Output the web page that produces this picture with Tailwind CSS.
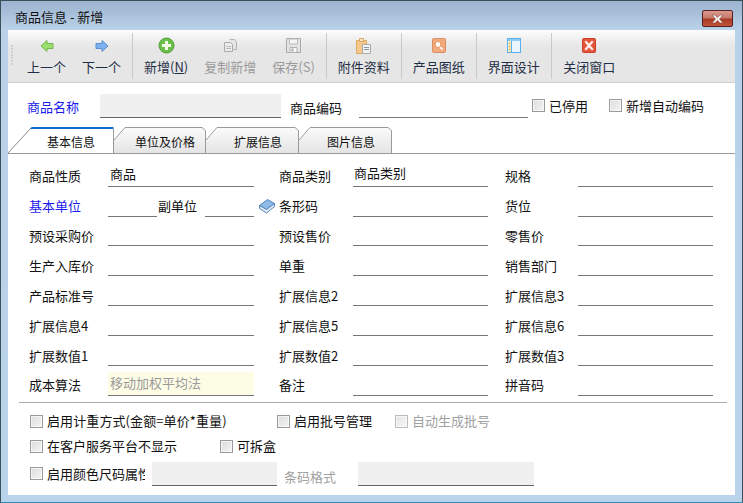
<!DOCTYPE html>
<html lang="zh-CN">
<head>
<meta charset="utf-8">
<title>商品信息 - 新增</title>
<script src="https://cdn.jsdelivr.net/npm/@tailwindcss/browser@4"></script>
</head>
<body class="m-0 w-[743px] h-[503px] overflow-hidden bg-[#b9d3ea] font-['Noto_Sans_CJK_SC','Liberation_Sans',sans-serif] text-[13px] leading-[18px] text-[#111]">
<div class="w-[743px] h-[503px] flex flex-col border border-[#3c4f5c] border-b-[#2a8fb0] bg-[linear-gradient(180deg,#9bb4cf_0px,#a6bdd7_10px,#b9d2e9_29px,#b9d3ea_100%)]">
  <!-- Title bar -->
  <div class="h-[29px] shrink-0 flex items-start pl-[14px] pr-[9px]">
    <span class="text-[#111] mt-[7px]">商品信息 - 新增</span>
    <div class="ml-auto w-[31px] h-[17px] mt-[9px] rounded-[2px] border border-[#5a2020] bg-[linear-gradient(180deg,#d99a8e_0%,#c87a6c_45%,#a93a26_55%,#c2543c_100%)] flex items-center justify-center">
      <svg width="15" height="10" viewBox="0 0 15 10"><path d="M2 1h3l2.500 2.500L10 1h3L9.500 5 13 9h-3L7.500 6.500 5 9H2l3.500-4z" fill="#f4f0ee" stroke="#7a4038" stroke-width=".5"/></svg>
    </div>
  </div>
  <!-- Client area -->
  <div class="ml-[7px] mr-[7px] w-[727px] h-[465px] bg-white flex flex-col">
    <!-- Toolbar -->
    <div class="h-[53px] shrink-0 flex items-start border-b border-[#cfcfcf] bg-[linear-gradient(180deg,#fdfdfd_0px,#ececec_12px,#e6e6e6_18px,#e6e6e6_100%)]">
      <div class="w-[11px] shrink-0 h-full flex flex-col gap-[1px] pt-[15px] pl-[3px]">
        <i class="block w-[2px] h-[2px] bg-[#cfcfcf]"></i><i class="block w-[2px] h-[2px] bg-[#cfcfcf]"></i><i class="block w-[2px] h-[2px] bg-[#cfcfcf]"></i><i class="block w-[2px] h-[2px] bg-[#cfcfcf]"></i><i class="block w-[2px] h-[2px] bg-[#cfcfcf]"></i><i class="block w-[2px] h-[2px] bg-[#cfcfcf]"></i><i class="block w-[2px] h-[2px] bg-[#cfcfcf]"></i>
      </div>
      <div class="w-[55px] shrink-0 flex flex-col items-center pt-[9px] text-[#1f2f45]">
        <svg class="h-[14px]" width="14" height="14" viewBox="0 0 14 14"><path d="M7 1.500 1 7l6 5.500V9.500h6v-5H7z" fill="#9ade6e" stroke="#72b84c"/></svg>
        <span class="mt-[5px]">上一个</span>
      </div>
      <div class="w-[55px] shrink-0 flex flex-col items-center pt-[9px] text-[#1f2f45]">
        <svg class="h-[14px]" width="14" height="14" viewBox="0 0 14 14"><path d="M7 1.500 13 7l-6 5.500V9.500H1v-5h6z" fill="#7fb2ee" stroke="#5a8fd0"/></svg>
        <span class="mt-[5px]">下一个</span>
      </div>
      <i class="block w-[1px] h-[46px] mt-[3px] ml-[3px] bg-[#c9c9c9]"></i>
      <div class="pl-[11px] pr-[16px] shrink-0 flex flex-col items-center pt-[7px] text-[#1f2f45]">
        <svg class="h-[17px]" width="17" height="17" viewBox="0 0 17 17"><circle cx="8.500" cy="8.500" r="7.500" fill="#6cc04a" stroke="#4f9f38"/><path d="M7 4h3v3h3v3h-3v3H7v-3H4V7h3z" fill="#f2fbe9"/></svg>
        <span class="mt-[4px]">新增(<span class="underline">N</span>)</span>
      </div>
      <div class="pr-[16px] shrink-0 flex flex-col items-center pt-[8px] text-[#9a9a9a]">
        <svg class="h-[15px]" width="15" height="15" viewBox="0 0 15 15"><path d="M6.500 1.500h5l2 2v8h-3" fill="#e4e4e4" stroke="#b4b4b4"/><path d="M1.500 4.500h6l2 2v7h-8z" fill="#ececec" stroke="#aaa"/><path d="M3 8.500h5M3 10.500h5" stroke="#bbb"/></svg>
        <span class="mt-[5px]">复制新增</span>
      </div>
      <div class="pr-[11px] shrink-0 flex flex-col items-center pt-[8px] text-[#9a9a9a]">
        <svg class="h-[15px]" width="15" height="15" viewBox="0 0 15 15"><path d="M.500.500h14v14H.500z" fill="#e4e4e4" stroke="#aaa"/><path d="M3.500 1h8v5h-8z" fill="#f4f4f4" stroke="#bbb"/><path d="M4 9.500h7v5H4z" fill="#f7f7f7" stroke="#b0b0b0"/><path d="M5.500 10.500h2v3h-2z" fill="#aaa"/></svg>
        <span class="mt-[5px]">保存(S)</span>
      </div>
      <i class="block w-[1px] h-[46px] mt-[3px] bg-[#c9c9c9]"></i>
      <div class="w-[74px] shrink-0 flex flex-col items-center pt-[7px] text-[#1f2f45]">
        <svg class="h-[17px]" width="15" height="17" viewBox="0 0 15 17"><path d="M.500 3.500h10v13H.500z" fill="#f6c98b" stroke="#e0a860"/><path d="M3.500 1.500h4v3h-4z" fill="#f8e6c8" stroke="#d8a868"/><path d="M6.500 7.500h8v9h-8z" fill="#f2f2f2" stroke="#aaa"/><path d="M8 10.500h5M8 12.500h5" stroke="#8a98a8"/></svg>
        <span class="mt-[4px]">附件资料</span>
      </div>
      <i class="block w-[1px] h-[46px] mt-[3px] bg-[#c9c9c9]"></i>
      <div class="w-[74px] shrink-0 flex flex-col items-center pt-[8px] text-[#1f2f45]">
        <svg class="h-[15px]" width="14" height="15" viewBox="0 0 14 15"><rect x=".5" y=".5" width="13" height="14" rx="1" fill="#f2ab80" stroke="#d98e60"/><circle cx="6" cy="6.500" r="3" fill="#fff" stroke="#e89a5e" stroke-width="1.200"/><path d="m8 9 2.500 2.500" stroke="#fff" stroke-width="1.500"/></svg>
        <span class="mt-[5px]">产品图纸</span>
      </div>
      <i class="block w-[1px] h-[46px] mt-[3px] bg-[#c9c9c9]"></i>
      <div class="w-[74px] shrink-0 flex flex-col items-center pt-[8px] text-[#1f2f45]">
        <svg class="h-[15px]" width="14" height="15" viewBox="0 0 14 15"><rect x=".5" y=".5" width="13" height="14" fill="#eaf5fd" stroke="#58b0ee"/><rect x="1" y="1" width="12" height="2" fill="#8ccbf4"/><rect x="1.500" y="3" width="3" height="11" fill="#fbe6a8"/><path d="M2.500 5v1M2.500 8v1M2.500 11v1" stroke="#d89a30"/><path d="M4.500 3v11" stroke="#58b0ee"/></svg>
        <span class="mt-[5px]">界面设计</span>
      </div>
      <i class="block w-[1px] h-[46px] mt-[3px] bg-[#c9c9c9]"></i>
      <div class="w-[75px] shrink-0 flex flex-col items-center pt-[8px] text-[#1f2f45]">
        <svg class="h-[15px]" width="14" height="15" viewBox="0 0 14 15"><rect x=".5" y=".5" width="13" height="14" rx="1" fill="#e6543a" stroke="#c8402a"/><path d="M2.500 4 4 2.500l3 3 3-3L11.500 4l-3 3.500 3 3.500-1.500 1.500-3-3-3 3L2.500 11l3-3.500z" fill="#fbeeea"/></svg>
        <span class="mt-[5px]">关闭窗口</span>
      </div>
    </div>

    <!-- Name row -->
    <div class="h-[44px] shrink-0 flex items-start">
      <span class="ml-[19px] mt-[15px] w-[52px] whitespace-nowrap text-[#1a1aee]">商品名称</span>
      <div class="ml-[21px] mt-[11px] w-[181px] h-[24px] bg-[#f0f0f0] border-b border-[#666]"></div>
      <span class="ml-[9px] mt-[16px] w-[52px] whitespace-nowrap">商品编码</span>
      <div class="ml-[17px] mt-[11px] w-[169px] h-[24px] border-b border-[#777]"></div>
      <i class="ml-[4px] mt-[16px] block w-[13px] h-[13px] border border-[#9a9a9a] bg-[linear-gradient(135deg,#dcdcdc,#f4f4f4)] outline outline-1 -outline-offset-2 outline-white/60"></i>
      <span class="ml-[4px] mt-[14px] whitespace-nowrap">已停用</span>
      <i class="ml-[21px] mt-[16px] block w-[13px] h-[13px] border border-[#9a9a9a] bg-[linear-gradient(135deg,#dcdcdc,#f4f4f4)] outline outline-1 -outline-offset-2 outline-white/60"></i>
      <span class="ml-[4px] mt-[14px] whitespace-nowrap">新增自动编码</span>
    </div>

    <!-- Tabs -->
    <div class="h-[27px] shrink-0 flex items-stretch border-b border-[#999] text-[12px]">
      <div class="relative w-[106px] shrink-0 flex items-center">
        <svg class="absolute left-0 top-0" width="106" height="26" viewBox="0 0 106 26"><path d="M0 26 23 1h82v25z" fill="#fff"/><path d="M0 26 23 1" stroke="#8a8a8a" fill="none"/><path d="M105.500 2v24" stroke="#999" fill="none"/><path d="M23 .5 24 0h81.500v2H22z" fill="#0a6fd0"/></svg>
        <span class="relative ml-[39px] mt-[3px]">基本信息</span>
      </div>
      <div class="relative w-[92px] shrink-0 flex items-center">
        <svg class="absolute left-0 top-0" width="92" height="26" viewBox="0 0 92 26"><defs><linearGradient id="t1" x1="0" y1="0" x2="0" y2="1"><stop offset="0" stop-color="#fbfbfb"/><stop offset="1" stop-color="#e4e4e4"/></linearGradient></defs><path d="M0 13 11 .5h77l3.500 3V26H0z" fill="url(#t1)"/><path d="M0 13 11 .5h77l3.500 3V26" stroke="#999" fill="none"/></svg>
        <span class="relative ml-[21px] mt-[3px] whitespace-nowrap">单位及价格</span>
      </div>
      <div class="relative w-[93px] shrink-0 flex items-center">
        <svg class="absolute left-0 top-0" width="93" height="26" viewBox="0 0 93 26"><defs><linearGradient id="t2" x1="0" y1="0" x2="0" y2="1"><stop offset="0" stop-color="#fbfbfb"/><stop offset="1" stop-color="#e4e4e4"/></linearGradient></defs><path d="M0 13 11 .5h78l3.500 3V26H0z" fill="url(#t2)"/><path d="M0 13 11 .5h78l3.500 3V26" stroke="#999" fill="none"/></svg>
        <span class="relative ml-[28px] mt-[3px] whitespace-nowrap">扩展信息</span>
      </div>
      <div class="relative w-[93px] shrink-0 flex items-center">
        <svg class="absolute left-0 top-0" width="93" height="26" viewBox="0 0 93 26"><defs><linearGradient id="t3" x1="0" y1="0" x2="0" y2="1"><stop offset="0" stop-color="#fbfbfb"/><stop offset="1" stop-color="#e4e4e4"/></linearGradient></defs><path d="M0 13 11 .5h78l3.500 3V26H0z" fill="url(#t3)"/><path d="M0 13 11 .5h78l3.500 3V26" stroke="#999" fill="none"/></svg>
        <span class="relative ml-[28px] mt-[3px] whitespace-nowrap">图片信息</span>
      </div>
    </div>

    <!-- Field grid -->
    <div class="pl-[21px] pt-[3px] grid grid-cols-[250px_226px_208px] grid-rows-[30px_30px_29px_30px_30px_30px_30px_30px]">
      <div class="flex items-end pr-[25px]"><span class="w-[79px] shrink-0 mb-[2px]">商品性质</span><div class="flex-1 h-[24px] border-b border-[#777] pl-[2px] pt-[2px]">商品</div></div>
      <div class="flex items-end pr-[17px]"><span class="w-[74px] shrink-0 mb-[2px]">商品类别</span><div class="flex-1 h-[24px] border-b border-[#777] pl-[1px] pt-[1px]">商品类别</div></div>
      <div class="flex items-end"><span class="w-[73px] shrink-0 mb-[2px]">规格</span><div class="flex-1 h-[24px] border-b border-[#777]"></div></div>

      <div class="flex items-end pr-[25px]"><span class="w-[79px] shrink-0 mb-[2px] text-[#1a1aee]">基本单位</span><div class="w-[49px] h-[24px] border-b border-[#777]"></div><span class="ml-[1px] w-[47px] shrink-0 mb-[2px]">副单位</span><div class="flex-1 h-[24px] border-b border-[#777]"></div></div>
      <div class="flex items-end pr-[17px] relative"><svg class="absolute left-[-20px] top-[12px]" width="16" height="15" viewBox="0 0 16 15"><path d="M.5 6.500 8.500.5l7 4-8 6z" fill="#8fbbe8" stroke="#4f82ba"/><path d="M.5 6.500v3l7 4.500 8-6.500v-3l-8 6z" fill="#e3eef9" stroke="#4f82ba"/></svg><span class="w-[74px] shrink-0 mb-[2px]">条形码</span><div class="flex-1 h-[24px] border-b border-[#777]"></div></div>
      <div class="flex items-end"><span class="w-[73px] shrink-0 mb-[2px]">货位</span><div class="flex-1 h-[24px] border-b border-[#777]"></div></div>

      <div class="flex items-end pr-[25px]"><span class="w-[79px] shrink-0 mb-[1px]">预设采购价</span><div class="flex-1 h-[24px] border-b border-[#777]"></div></div>
      <div class="flex items-end pr-[17px]"><span class="w-[74px] shrink-0 mb-[1px]">预设售价</span><div class="flex-1 h-[24px] border-b border-[#777]"></div></div>
      <div class="flex items-end"><span class="w-[73px] shrink-0 mb-[1px]">零售价</span><div class="flex-1 h-[24px] border-b border-[#777]"></div></div>

      <div class="flex items-end pr-[25px]"><span class="w-[79px] shrink-0 mb-[1px]">生产入库价</span><div class="flex-1 h-[24px] border-b border-[#777]"></div></div>
      <div class="flex items-end pr-[17px]"><span class="w-[74px] shrink-0 mb-[1px]">单重</span><div class="flex-1 h-[24px] border-b border-[#777]"></div></div>
      <div class="flex items-end"><span class="w-[73px] shrink-0 mb-[1px]">销售部门</span><div class="flex-1 h-[24px] border-b border-[#777]"></div></div>

      <div class="flex items-end pr-[25px]"><span class="w-[79px] shrink-0 mb-[1px]">产品标准号</span><div class="flex-1 h-[24px] border-b border-[#777]"></div></div>
      <div class="flex items-end pr-[17px]"><span class="w-[74px] shrink-0 mb-[1px]">扩展信息2</span><div class="flex-1 h-[24px] border-b border-[#777]"></div></div>
      <div class="flex items-end"><span class="w-[73px] shrink-0 mb-[1px]">扩展信息3</span><div class="flex-1 h-[24px] border-b border-[#777]"></div></div>

      <div class="flex items-end pr-[25px]"><span class="w-[79px] shrink-0 mb-[1px]">扩展信息4</span><div class="flex-1 h-[24px] border-b border-[#777]"></div></div>
      <div class="flex items-end pr-[17px]"><span class="w-[74px] shrink-0 mb-[1px]">扩展信息5</span><div class="flex-1 h-[24px] border-b border-[#777]"></div></div>
      <div class="flex items-end"><span class="w-[73px] shrink-0 mb-[1px]">扩展信息6</span><div class="flex-1 h-[24px] border-b border-[#777]"></div></div>

      <div class="flex items-end pr-[25px]"><span class="w-[79px] shrink-0 mb-[1px]">扩展数值1</span><div class="flex-1 h-[24px] border-b border-[#777]"></div></div>
      <div class="flex items-end pr-[17px]"><span class="w-[74px] shrink-0 mb-[1px]">扩展数值2</span><div class="flex-1 h-[24px] border-b border-[#777]"></div></div>
      <div class="flex items-end"><span class="w-[73px] shrink-0 mb-[1px]">扩展数值3</span><div class="flex-1 h-[24px] border-b border-[#777]"></div></div>

      <div class="flex items-end pr-[25px]"><span class="w-[79px] shrink-0 mb-[2px]">成本算法</span><div class="flex-1 h-[24px] border-b border-[#777] bg-[#fdfde6] pl-[2px] pt-[2px] text-[#9a9a9a]">移动加权平均法</div></div>
      <div class="flex items-end pr-[17px]"><span class="w-[74px] shrink-0 mb-[2px]">备注</span><div class="flex-1 h-[24px] border-b border-[#777]"></div></div>
      <div class="flex items-end"><span class="w-[73px] shrink-0 mb-[2px]">拼音码</span><div class="flex-1 h-[24px] border-b border-[#777]"></div></div>
    </div>

    <div class="ml-[11px] w-[708px] h-[1px] mt-[6px] bg-[#aaa] shrink-0"></div>

    <!-- Options -->
    <div class="h-[18px] mt-[9px] ml-[22px] flex items-center shrink-0">
      <i class="block w-[13px] h-[13px] border border-[#9a9a9a] bg-[linear-gradient(135deg,#dcdcdc,#f4f4f4)] outline outline-1 -outline-offset-2 outline-white/60"></i><span class="ml-[4px] w-[230px] whitespace-nowrap tracking-[0.1px]">启用计重方式(金额=单价*重量)</span>
      <i class="block w-[13px] h-[13px] border border-[#9a9a9a] bg-[linear-gradient(135deg,#dcdcdc,#f4f4f4)] outline outline-1 -outline-offset-2 outline-white/60"></i><span class="ml-[4px] w-[101px] whitespace-nowrap">启用批号管理</span>
      <i class="block w-[13px] h-[13px] border border-[#bcbcbc] bg-[linear-gradient(135deg,#e4e4e4,#f6f6f6)] outline outline-1 -outline-offset-2 outline-white/60"></i><span class="ml-[4px] whitespace-nowrap text-[#a0a0a0]">自动生成批号</span>
    </div>
    <div class="h-[18px] mt-[7px] ml-[22px] flex items-center shrink-0">
      <i class="block w-[13px] h-[13px] border border-[#9a9a9a] bg-[linear-gradient(135deg,#dcdcdc,#f4f4f4)] outline outline-1 -outline-offset-2 outline-white/60"></i><span class="ml-[4px] w-[173px] whitespace-nowrap">在客户服务平台不显示</span>
      <i class="block w-[13px] h-[13px] border border-[#9a9a9a] bg-[linear-gradient(135deg,#dcdcdc,#f4f4f4)] outline outline-1 -outline-offset-2 outline-white/60"></i><span class="ml-[4px] whitespace-nowrap">可拆盒</span>
    </div>
    <div class="h-[25px] mt-[7px] ml-[22px] flex items-start shrink-0">
      <i class="block w-[13px] h-[13px] mt-[5px] border border-[#9a9a9a] bg-[linear-gradient(135deg,#dcdcdc,#f4f4f4)] outline outline-1 -outline-offset-2 outline-white/60"></i><span class="ml-[4px] mt-[3px] w-[98px] overflow-hidden whitespace-nowrap">启用颜色尺码属性</span>
      <div class="ml-[7px] w-[125px] h-[24px] bg-[#f0f0f0] border-b border-[#666]"></div>
      <span class="ml-[7px] mt-[6px] w-[52px] whitespace-nowrap text-[#a0a0a0]">条码格式</span>
      <div class="ml-[22px] w-[176px] h-[24px] bg-[#f0f0f0] border-b border-[#666]"></div>
    </div>
  </div>
</div>
</body>
</html>
